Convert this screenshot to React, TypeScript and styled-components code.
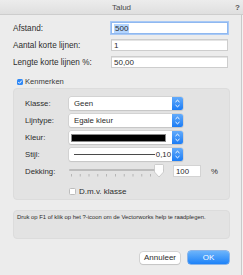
import React from "react";
import styled, { createGlobalStyle } from "styled-components";

const GlobalStyle = createGlobalStyle`
  html, body {
    margin: 0;
    padding: 0;
  }
  body {
    background: #ececec;
    font-family: "Liberation Sans", Arial, sans-serif;
    color: #2c2c2c;
  }
  * {
    box-sizing: border-box;
  }
`;

const Stepper: React.FC = () => (
  <StepperBox>
    <svg width="11" height="13" viewBox="0 0 11 13">
      <path d="M3.5 5 L5.5 3.2 L7.5 5" fill="none" stroke="#fff" strokeWidth="1" />
      <path d="M3.5 8 L5.5 9.8 L7.5 8" fill="none" stroke="#fff" strokeWidth="1" />
    </svg>
  </StepperBox>
);

const Slider: React.FC<{ value: number }> = ({ value }) => {
  const ticks = Array.from({ length: 11 }, (_, i) => 2 + i * 8.8);
  const thumbX = 2 + value * 0.88;
  return (
    <SliderBox>
      <svg width="97" height="14" viewBox="0 0 97 14">
        <rect x="0" y="5" width="95" height="2" rx="1" fill="#bcbcbc" />
        {ticks.map((t, i) => (
          <rect key={i} x={t} y="10" width="0.8" height="2.5" fill="#ababab" />
        ))}
        <path
          d={`M${thumbX - 4.5} 1.5 Q${thumbX - 4.5} 0.5 ${thumbX - 3.5} 0.5 L${thumbX + 3.5} 0.5 Q${thumbX + 4.5} 0.5 ${thumbX + 4.5} 1.5 L${thumbX + 4.5} 8 L${thumbX} 13 L${thumbX - 4.5} 8 Z`}
          fill="#fdfdfd"
          stroke="#bdbdbd"
          strokeWidth="0.7"
        />
      </svg>
    </SliderBox>
  );
};

const App: React.FC = () => {
  return (
    <Window>
      <GlobalStyle />
      <TitleBar>
        <span />
        <Title>Talud</Title>
        <HelpMark>?</HelpMark>
      </TitleBar>
      <Content>
        <Body>
          <Fields>
            <FieldRow>
              <FieldLabel>Afstand:</FieldLabel>
              <TextBox focused>
                <Selected>500</Selected>
              </TextBox>
            </FieldRow>
            <FieldRow>
              <FieldLabel>Aantal korte lijnen:</FieldLabel>
              <TextBox>1</TextBox>
            </FieldRow>
            <FieldRow>
              <FieldLabel>Lengte korte lijnen %:</FieldLabel>
              <TextBox>50,00</TextBox>
            </FieldRow>
          </Fields>

          <SectionToggle>
            <CheckBox checked>
              <svg width="6" height="6" viewBox="0 0 6 6">
                <path d="M1.3 3.1 L2.5 4.3 L4.8 1.6" fill="none" stroke="#fff" strokeWidth="1" />
              </svg>
            </CheckBox>
            <SectionTitle>Kenmerken</SectionTitle>
          </SectionToggle>

          <Group>
            <GroupRow>
              <GroupLabel>Klasse:</GroupLabel>
              <Popup>
                <PopupText>Geen</PopupText>
                <Stepper />
              </Popup>
            </GroupRow>
            <GroupRow>
              <GroupLabel>Lijntype:</GroupLabel>
              <Popup>
                <PopupText>Egale kleur</PopupText>
                <Stepper />
              </Popup>
            </GroupRow>
            <GroupRow>
              <GroupLabel>Kleur:</GroupLabel>
              <Popup>
                <Swatch />
                <Stepper />
              </Popup>
            </GroupRow>
            <GroupRow>
              <GroupLabel>Stijl:</GroupLabel>
              <Popup>
                <LineSample />
                <LineValue>0,10</LineValue>
                <Stepper />
              </Popup>
            </GroupRow>
            <OpacityRow>
              <GroupLabel>Dekking:</GroupLabel>
              <Slider value={100} />
              <SmallBox>100</SmallBox>
              <Unit>%</Unit>
            </OpacityRow>
            <ClassToggle>
              <CheckBox />
              <ToggleText>D.m.v. klasse</ToggleText>
            </ClassToggle>
          </Group>

          <HelpBox>Druk op F1 of klik op het ?-icoon om de Vectorworks help te raadplegen.</HelpBox>

          <Buttons>
            <Button>Annuleer</Button>
            <Button primary>OK</Button>
          </Buttons>
        </Body>
        <Edge />
      </Content>
    </Window>
  );
};

export default App;

const Window = styled.div`
  width: 243px;
  height: 275px;
  display: flex;
  flex-direction: column;
  overflow: hidden;
  background: #ececec;
`;

const TitleBar = styled.div`
  height: 15px;
  display: grid;
  grid-template-columns: 1fr auto 1fr;
  align-items: center;
  background: linear-gradient(#ececec, #dfdfdf);
  border-bottom: 1px solid #cdcdcd;
`;

const Title = styled.span`
  font-size: 8px;
  color: #4a4a4a;
`;

const HelpMark = styled.span`
  justify-self: end;
  padding-right: 3px;
  font-size: 8px;
  font-weight: bold;
  color: #555;
`;

const Content = styled.div`
  flex: 1;
  display: flex;
`;

const Body = styled.div`
  width: 241px;
  padding: 7px 11px 0 13px;
  display: flex;
  flex-direction: column;
`;

const Edge = styled.div`
  flex: 1;
  border-left: 1px solid #c9c9c9;
  background: #f2f2f2;
`;

const Fields = styled.div`
  display: flex;
  flex-direction: column;
  gap: 5px;
`;

const FieldRow = styled.div`
  display: flex;
  align-items: center;
  height: 12px;
`;

const FieldLabel = styled.span`
  width: 98px;
  font-size: 8.2px;
`;

const TextBox = styled.div<{ focused?: boolean }>`
  width: 117px;
  height: 12px;
  padding-left: 2px;
  display: flex;
  align-items: center;
  background: #fff;
  font-size: 8px;
  border: 1px solid ${(p) => (p.focused ? "#8fb8f0" : "#cdcdcd")};
  box-shadow: ${(p) => (p.focused ? "0 0 0 1px #a9c9f5" : "inset 0 1px 0 #e4e4e4")};
`;

const Selected = styled.span`
  background: #b4d5fe;
  padding: 0 1px;
  line-height: 9px;
`;

const SectionToggle = styled.div`
  display: flex;
  align-items: center;
  gap: 2px;
  margin: 10px 0 0 4px;
  height: 7px;
`;

const CheckBox = styled.span<{ checked?: boolean }>`
  width: ${(p) => (p.checked ? 6 : 7)}px;
  height: ${(p) => (p.checked ? 6 : 7)}px;
  border-radius: 1.5px;
  display: flex;
  align-items: center;
  justify-content: center;
  background: ${(p) => (p.checked ? "#2f88f6" : "#fff")};
  border: ${(p) => (p.checked ? "none" : "1px solid #bdbdbd")};
`;

const SectionTitle = styled.span`
  font-size: 7.6px;
  color: #3a3a3a;
`;

const Group = styled.div`
  margin-top: 3px;
  height: 112px;
  padding: 8px 0 0 11px;
  background: #e3e3e3;
  border: 1px solid #dcdcdc;
  border-radius: 4px;
  display: flex;
  flex-direction: column;
`;

const GroupRow = styled.div`
  display: flex;
  align-items: center;
  height: 13px;
  margin-bottom: 4px;
`;

const GroupLabel = styled.span`
  width: 44px;
  font-size: 7.8px;
`;

const Popup = styled.div`
  width: 114px;
  height: 13px;
  display: flex;
  align-items: center;
  background: #fff;
  border-radius: 2px;
  box-shadow: 0 0 0 0.5px #c4c4c4, 0 1px 1px rgba(0, 0, 0, 0.12);
  overflow: hidden;
`;

const PopupText = styled.span`
  flex: 1;
  padding-left: 5px;
  font-size: 7.8px;
`;

const StepperBox = styled.span`
  width: 11px;
  height: 13px;
  display: flex;
  background: linear-gradient(#63abfb, #1b7cf5);
`;

const Swatch = styled.span`
  flex: none;
  width: 95px;
  height: 8px;
  margin: 0 6px 0 2px;
  background: #000;
  border: 1px solid #8a8a8a;
`;

const LineSample = styled.span`
  flex: 1;
  height: 1px;
  margin-left: 5px;
  background: #4a4a4a;
`;

const LineValue = styled.span`
  padding: 0 1px;
  font-size: 7.8px;
`;

const OpacityRow = styled.div`
  display: flex;
  align-items: center;
  height: 14px;
  margin-top: -1px;
`;

const SliderBox = styled.span`
  display: flex;
  width: 97px;
  height: 14px;
`;

const SmallBox = styled.span`
  width: 28px;
  height: 12px;
  margin-left: 7px;
  padding-left: 2px;
  display: flex;
  align-items: center;
  background: #fff;
  border: 1px solid #d3d3d3;
  font-size: 7.8px;
`;

const Unit = styled.span`
  margin-left: 10px;
  font-size: 7.8px;
`;

const ClassToggle = styled.div`
  display: flex;
  align-items: center;
  gap: 3px;
  margin: 10px 0 0 44px;
  height: 7px;
`;

const ToggleText = styled.span`
  font-size: 8px;
`;

const HelpBox = styled.div`
  margin-top: 10px;
  height: 29px;
  padding: 2px 3px;
  background: #e3e3e3;
  border: 1px solid #dcdcdc;
  border-radius: 4px;
  font-size: 5.9px;
  line-height: 8px;
`;

const Buttons = styled.div`
  display: flex;
  justify-content: flex-end;
  align-items: center;
  gap: 8px;
  margin-top: 12px;
  padding-right: 1px;
`;

const Button = styled.span<{ primary?: boolean }>`
  width: ${(p) => (p.primary ? 41 : 40)}px;
  height: ${(p) => (p.primary ? 13 : 12)}px;
  display: flex;
  align-items: center;
  justify-content: center;
  border-radius: 3px;
  font-size: 8px;
  color: ${(p) => (p.primary ? "#fff" : "#2c2c2c")};
  background: ${(p) => (p.primary ? "linear-gradient(#6cb4fb, #1d82f8)" : "#fff")};
  box-shadow: ${(p) =>
    p.primary ? "0 0 0 0.5px #2a7fe6" : "0 0 0 0.5px #bcbcbc, 0 1px 1px rgba(0,0,0,0.12)"};
`;
